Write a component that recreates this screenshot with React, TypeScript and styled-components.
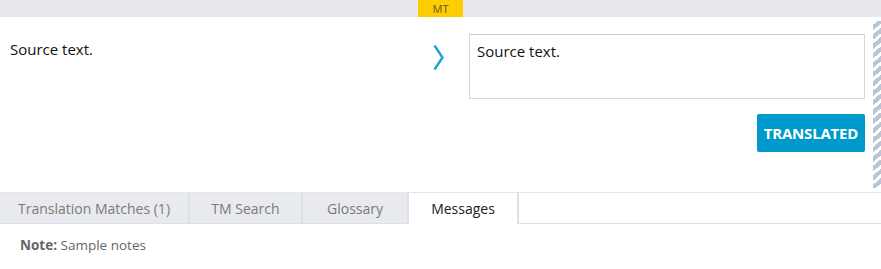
import React from "react";
import styled, { createGlobalStyle } from "styled-components";

const Global = createGlobalStyle`
  html, body { margin: 0; padding: 0; background: #fff; }
  body { font-family: "Open Sans", "Noto Sans", sans-serif; }
`;

const Page = styled.div`
  width: 881px;
  height: 269px;
  display: flex;
  flex-direction: column;
  overflow: hidden;
`;

const TopBar = styled.div`
  height: 17px;
  background: #e8e9ed;
  display: flex;
  justify-content: center;
`;

const Badge = styled.div`
  width: 45px;
  height: 17px;
  background: #ffcc00;
  color: #5c5a2a;
  font-size: 11px;
  line-height: 17px;
  text-align: center;
`;

const Main = styled.div`
  height: 175px;
  display: flex;
`;

const Source = styled.div`
  width: 420px;
  padding: 22px 0 0 10px;
  box-sizing: border-box;
  font-size: 15px;
  color: #111;
`;

const Arrow = styled.div`
  width: 49px;
  padding-top: 27px;
  padding-left: 13px;
  box-sizing: border-box;
`;

const Target = styled.div`
  flex: 1;
  display: flex;
  flex-direction: column;
  align-items: flex-end;
  padding-top: 17px;
  padding-right: 8px;
`;

const Editor = styled.div`
  width: 396px;
  height: 65px;
  box-sizing: border-box;
  border: 1px solid #d5d9df;
  border-top-color: #c9ced6;
  padding: 6px 7px;
  font-size: 15px;
  color: #111;
`;

const Button = styled.button`
  margin-top: 15px;
  width: 108px;
  height: 38px;
  border: none;
  border-radius: 2px;
  background: #0099cc;
  color: #fff;
  font-family: "Open Sans", "Noto Sans", sans-serif;
  font-weight: 700;
  font-size: 15px;
  letter-spacing: -0.2px;
  padding: 0;
`;

const Stripe = styled.div`
  width: 8px;
  margin-top: 4px;
  margin-bottom: 4px;
  background: repeating-linear-gradient(
    140deg,
    #fff 0px,
    #fff 3px,
    #b9c5d5 3px,
    #b9c5d5 7.2px
  );
`;

const TabBar = styled.div`
  height: 31px;
  display: flex;
  background: #fff;
  border-top: 1px solid #e2e6eb;
`;

const Tab = styled.div<{ $w: number; $active?: boolean }>`
  width: ${(p) => p.$w}px;
  box-sizing: border-box;
  height: 31px;
  line-height: 31px;
  text-align: center;
  font-size: 14px;
  background: ${(p) => (p.$active ? "#fff" : "#e9eaee")};
  color: ${(p) => (p.$active ? "#222" : "#7a7a7a")};
  border-right: 2px solid #dbe1e8;
  border-bottom: ${(p) => (p.$active ? "none" : "1px solid #dbe1e8")};
`;

const TabFill = styled.div`
  flex: 1;
  border-bottom: 1px solid #dbe1e8;
`;

const Notes = styled.div`
  padding: 12px 0 0 20px;
  font-size: 13.5px;
  color: #666;
  b { font-weight: 700; }
`;

export default function App() {
  return (
    <Page>
      <Global />
      <TopBar>
        <Badge>MT</Badge>
      </TopBar>
      <Main>
        <Source>Source text.</Source>
        <Arrow>
          <svg width="11" height="27" viewBox="0 0 11 27">
            <path d="M1.5 1.5 L9.5 13.5 L1.5 25.5" fill="none" stroke="#1ca3d3" strokeWidth="2.4" />
          </svg>
        </Arrow>
        <Target>
          <Editor>Source text.</Editor>
          <Button>TRANSLATED</Button>
        </Target>
        <Stripe />
      </Main>
      <TabBar>
        <Tab $w={190}>Translation Matches (1)</Tab>
        <Tab $w={113}>TM Search</Tab>
        <Tab $w={106}>Glossary</Tab>
        <Tab $w={110} $active>Messages</Tab>
        <TabFill />
      </TabBar>
      <Notes>
        <b>Note:</b> Sample notes
      </Notes>
    </Page>
  );
}
